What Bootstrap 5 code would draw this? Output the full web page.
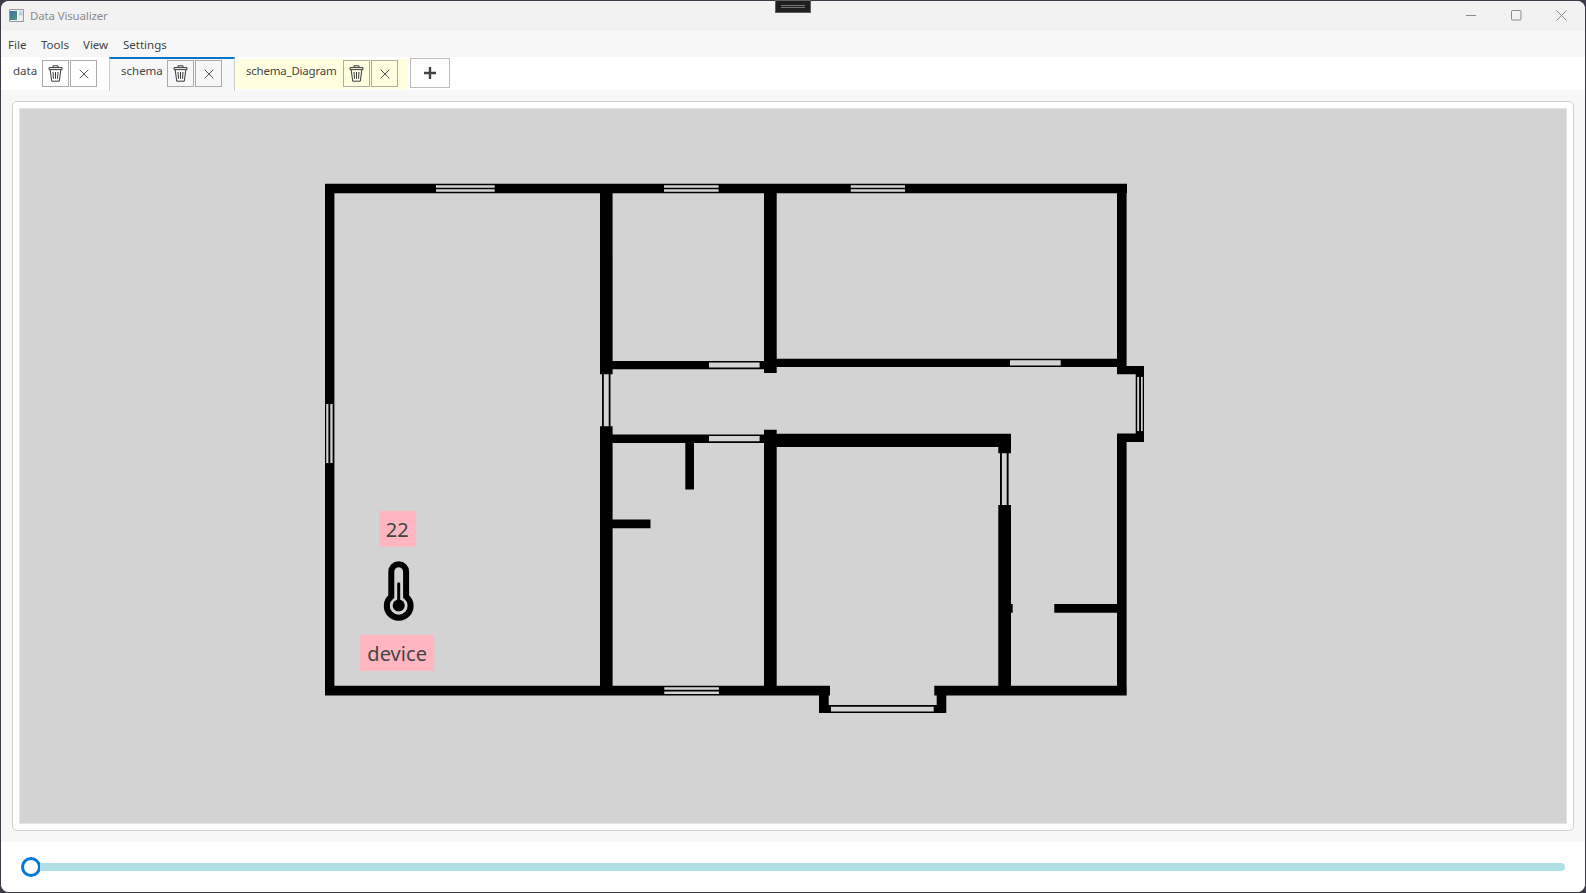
<!DOCTYPE html>
<html lang="en">
<head>
<meta charset="utf-8">
<meta name="viewport" content="width=device-width, initial-scale=1">
<title>Data Visualizer</title>
<link rel="stylesheet" href="https://cdn.jsdelivr.net/npm/bootstrap@5.3.0/dist/css/bootstrap.min.css">
<style>
  body { background: #3e3b48; font-family: "Noto Sans", "Open Sans", sans-serif; font-size: 11.5px; color: #444; line-height: 16px; padding: 1px 1px 1px 1px; }
  .app-window { border-radius: 8px; background: #f7f7f7; }
  .title-strip { height: 30px; background: #f2f2f2; color: #8b8b8b; padding: 0 0 2px 8px; }
  .title-strip .caption-text { margin-left: 6px; letter-spacing: -.15px; padding-top: 1px; }
  .menu-strip { height: 26px; padding-top: 2px; }
  .menu-strip a { color: #444; text-decoration: none; }
  .tab-strip { height: 33px; background: #fff; }
  .doc-tab { height: 33px; padding-top: 3px; }
  .doc-tab .tab-label { line-height: 16px; padding-top: 3px; flex: none; white-space: nowrap; }
  .doc-tab.first { width: 108px; padding-left: 12px; }
  .doc-tab.current { width: 126px; height: 34px; background: #f7f7f7; border-top: 2px solid #0078c8; border-left: 1px solid #ccc; border-right: 1px solid #ccc; padding: 1px 0 0 11px; z-index: 1; }
  .doc-tab.pinned { width: 173px; height: 30px; margin-top: 2px; background: #ffffe0; padding: 1px 0 0 11px; }
  .doc-tab.pinned .tab-label { letter-spacing: -.22px; }
  .tool-btn { width: 27px; height: 27px; border: 1px solid #ababab; border-radius: 0; padding: 0; display: flex; align-items: center; justify-content: center; background: transparent; flex: none; }
  .tool-btn + .tool-btn { margin-left: 1px; }
  .add-btn { width: 40px; height: 30px; margin: 1px 0 0 2px; border: 1px solid #bbb; background: #fff; }
  .work-area { padding: 11px 11px 10px 11px; min-height: 0; }
  .panel-frame { border: 1px solid #d0d0d0; border-radius: 5px; background: #fff; padding: 6px; height: 730px; }
  .plan-canvas { background: #d3d3d3; border: 1px solid #e4e4e4; height: 716px; }
  .tag { position: absolute; background: #ffb6c1; font-size: 20px; line-height: 37px; height: 35.5px; text-align: center; color: #444; }
  .tag-value { left: 359px; top: 402.4px; width: 36.6px; }
  .tag-name { left: 340px; top: 526.4px; width: 74.4px; letter-spacing: .05px; }
  .slider-bar { height: 50px; background: #fff; padding: 0 20px; }
  .slider-knob { width: 20px; height: 20px; border: 3px solid #0078d4; border-radius: 50%; background: #fff; }
  .slider-track { height: 8px; background: #b0e0e6; border-radius: 0 4px 4px 0; margin-left: -1px; }
  .grip { position: absolute; left: 775px; top: 0; width: 36px; height: 13px; background: #1f1f1f; border: 1px solid #5f5f5f; padding: 4px 5px; z-index: 5; }
  .grip i { display: block; height: 1px; background: #777; margin-bottom: 1px; }
</style>
</head>
<body class="vh-100 overflow-hidden">
<svg width="0" height="0" class="position-absolute">
  <symbol id="trash" viewBox="0 0 15 17">
    <g fill="none" stroke="#3a3a3a" stroke-width="1">
      <path d="M5 2.4V.8h5v1.6M1 2.6h13v2H1zM2.2 4.8l1.5 11.4h7.6l1.5-11.4"/>
      <path d="M5 7l.5 6.8M7.5 7v6.8M10 7l-.5 6.8"/>
    </g>
  </symbol>
  <symbol id="cross" viewBox="0 0 10 10"><path d="M.7.7l8.600 8.600M9.300.7L.7 9.300" fill="none" stroke="#555" stroke-width="1"/></symbol>
</svg>
<div class="grip"><i></i><i></i></div>
<div class="app-window d-flex flex-column h-100 overflow-hidden">
  <header class="title-strip d-flex align-items-center flex-shrink-0">
    <svg width="15" height="13" viewBox="0 0 15 13"><defs><linearGradient id="g" x2="1" y2="1"><stop stop-color="#3f6ea5"/><stop offset="1" stop-color="#4d9c74"/></linearGradient></defs><path d="M.5.5h14v12H.5z" fill="#eee" stroke="#999"/><path d="M1 2h7v9H1z" fill="url(#g)"/><path d="M10 2h3.5v4.500H10z" fill="#b9d5ee"/><path d="M8.500 2v9" stroke="#fff"/></svg>
    <span class="caption-text">Data Visualizer</span>
    <div class="ms-auto d-flex align-items-center" style="margin-right:18px;gap:34px">
      <svg width="11" height="11"><path d="M0 5.500h10" stroke="#8a8a8a"/></svg>
      <svg width="11" height="11"><rect x=".5" y=".5" width="9.500" height="9.500" rx="1" fill="none" stroke="#8a8a8a"/></svg>
      <svg width="11" height="11"><path d="M.5.5l10 10M10.500.5l-10 10" stroke="#8a8a8a"/></svg>
    </div>
  </header>
  <nav class="menu-strip d-flex align-items-center flex-shrink-0">
    <a href="#" style="margin-left:7px;width:33px">File</a><a href="#" style="width:42px">Tools</a><a href="#" style="width:40px">View</a><a href="#">Settings</a>
  </nav>
  <div class="tab-strip d-flex align-items-start flex-shrink-0">
    <div class="doc-tab first d-flex"><span class="tab-label" style="width:29px">data</span>
      <button class="tool-btn"><svg width="15" height="17"><use href="#trash"/></svg></button><button class="tool-btn"><svg width="10" height="10"><use href="#cross"/></svg></button></div>
    <div class="doc-tab current d-flex"><span class="tab-label" style="width:46px">schema</span>
      <button class="tool-btn"><svg width="15" height="17"><use href="#trash"/></svg></button><button class="tool-btn"><svg width="10" height="10"><use href="#cross"/></svg></button></div>
    <div class="doc-tab pinned d-flex"><span class="tab-label" style="width:97px">schema_Diagram</span>
      <button class="tool-btn"><svg width="15" height="17"><use href="#trash"/></svg></button><button class="tool-btn"><svg width="10" height="10"><use href="#cross"/></svg></button></div>
    <button class="tool-btn add-btn"><svg width="12" height="12"><path d="M0 6h12M6 0v12" stroke="#444" stroke-width="2.400"/></svg></button>
  </div>
  <main class="work-area flex-grow-1">
    <div class="panel-frame">
      <div class="plan-canvas position-relative overflow-hidden">
        <svg class="d-block w-100 h-100" viewBox="20 109 1545 714" preserveAspectRatio="xMinYMin">
          <!-- outer walls -->
          <path d="M325 183.700h802v9.600H325zM325 183.700h9.400v511.700H325zM325 685.700h505v9.700H325zM934.300 685.700h192.400v9.700H934.300zM1117 184h9.600v190H1117zM1117 433.600h9.600v261.800H1117zM1117 366h27v8.200h-27zM1117 433.600h27v8.400h-27zM1135.700 374h8.300v60h-8.300z"/>
          <!-- inner walls -->
          <path d="M600 184h12.600v190.300H600zM600 426.200h12.600V690H600zM764 184h12.700v189H764zM764 429.700h12.700V690H764zM612 361h152v8.300H612zM776 358.700h341v8.300H776zM612 434.400h152v8.600H612zM776 433.700h235v13.400H776zM998.300 434H1011v19.200h-12.700zM998.300 505H1011v185h-12.700zM685.300 443h8.700v46.500h-8.700zM612 519.600h38.500v8.600H612zM1054.300 604h62.700v8.700h-62.700zM1011 604h1.700v8.700h-1.700z"/>
          <!-- bay -->
          <path d="M819 695h9.700v11H819zM936.700 695h9.600v11h-9.600zM819 705h127.300v8H819z"/>
          <path d="M602 374h1.800v53H602zM608.700 374h1.800v53h-1.800zM1000 453h1.900v53H1000zM1006.700 453h1.900v53h-1.900z"/>
          <!-- window panes -->
          <path fill="#d3d3d3" d="M436 185.200h58.700v2.500H436zM436 189.300h58.700v2.400H436zM664 185.200h54.600v2.500H664zM664 189.300h54.600v2.400H664zM850.700 185.200H905v2.500h-54.300zM850.700 189.300H905v2.400h-54.300zM664.300 687.200h54.600v2.500h-54.600zM664.300 691.500h54.600v2.400h-54.600zM326.200 404h2.200v59h-2.200zM330.300 404h2.300v59h-2.300zM1137.200 377h1.900v54h-1.900zM1141 377h1.700v54H1141zM709 362.400h50.600v5.100H709zM709 436h50.600v5.300H709zM1010 360.200h50.700v5.400H1010zM831 706.700h102.700v4.800H831z"/>
          <!-- thermometer -->
          <g fill="none" stroke="#000"><path stroke-width="6" d="M391.300 596.500V571.700a7.400 7.400 0 0 1 14.800 0v24.800a11.900 11.900 0 1 1-14.800 0z"/><path stroke-width="3" stroke-linecap="round" d="M398.700 583.700V604"/></g>
          <circle cx="398.700" cy="605.600" r="6"/>
        </svg>
        <div class="tag tag-value">22</div>
        <div class="tag tag-name">device</div>
      </div>
    </div>
  </main>
  <footer class="slider-bar d-flex align-items-center flex-shrink-0">
    <div class="slider-knob flex-shrink-0"></div><div class="slider-track flex-grow-1"></div>
  </footer>
</div>
<script src="https://cdn.jsdelivr.net/npm/bootstrap@5.3.0/dist/js/bootstrap.bundle.min.js"></script>
</body>
</html>
